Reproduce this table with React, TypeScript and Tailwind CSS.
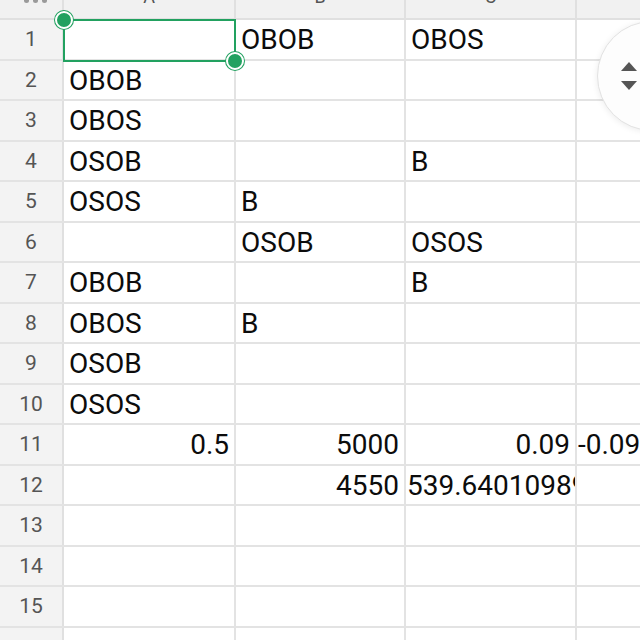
import React from "react";

type Cell = { t: string; a?: "l" | "r"; clip?: boolean };

const rows: (Cell | null)[][] = [
  [null, { t: "OBOB" }, { t: "OBOS" }, null],
  [{ t: "OBOB" }, null, null, null],
  [{ t: "OBOS" }, null, null, null],
  [{ t: "OSOB" }, null, { t: "B" }, null],
  [{ t: "OSOS" }, { t: "B" }, null, null],
  [null, { t: "OSOB" }, { t: "OSOS" }, null],
  [{ t: "OBOB" }, null, { t: "B" }, null],
  [{ t: "OBOS" }, { t: "B" }, null, null],
  [{ t: "OSOB" }, null, null, null],
  [{ t: "OSOS" }, null, null, null],
  [{ t: "0.5", a: "r" }, { t: "5000", a: "r" }, { t: "0.09", a: "r" }, { t: "-0.0945", clip: true }],
  [null, { t: "4550", a: "r" }, { t: "539.64010989", clip: true }, null],
  [null, null, null, null],
  [null, null, null, null],
  [null, null, null, null],
  [null, null, null, null],
];

const colW = ["w-[172px]", "w-[170px]", "w-[171px]", "w-[172px]"];

function CellView({ c, i }: { c: Cell | null; i: number }) {
  const base = `${colW[i]} shrink-0 h-full border-r-2 border-[#e3e3e3] flex items-center overflow-hidden whitespace-nowrap text-[28px] leading-none text-[#0c0c0c] pt-[2px]`;
  if (!c) return <div className={base} />;
  if (c.a === "r")
    return (
      <div className={`${base} justify-end pr-[5px]`}>
        <span>{c.t}</span>
      </div>
    );
  if (c.clip)
    return (
      <div className={`${base} pl-[1px]`}>
        <span>{c.t}</span>
      </div>
    );
  return (
    <div className={`${base} pl-[5px]`}>
      <span>{c.t}</span>
    </div>
  );
}

export default function App() {
  return (
    <div
      className="relative w-[640px] h-[640px] overflow-hidden bg-white"
      style={{ fontFamily: "Roboto, 'Noto Sans', sans-serif" }}
    >
      {/* header row */}
      <div className="flex h-[20px] bg-[#f1f1f1] border-b-2 border-[#e0e0e0] overflow-hidden">
        <div className="w-[64px] shrink-0 h-full border-r-2 border-[#e0e0e0] flex justify-center gap-[4px] pl-[8px]">
          <div className="w-[5px] h-[5px] rounded-full bg-[#9a9a9a] -mt-[2px]" />
          <div className="w-[5px] h-[5px] rounded-full bg-[#9a9a9a] -mt-[2px]" />
          <div className="w-[5px] h-[5px] rounded-full bg-[#9a9a9a] -mt-[2px]" />
        </div>
        {["A", "B", "C", "D"].map((l, i) => (
          <div
            key={l}
            className={`${colW[i]} shrink-0 h-full border-r-2 border-[#e0e0e0] flex justify-center text-[18px] leading-none text-[#555]`}
          >
            <span className="-mt-[12px]">{l}</span>
          </div>
        ))}
      </div>
      {rows.map((r, ri) => (
        <div key={ri} className="flex h-[40.5px] border-b-2 border-[#e3e3e3]">
          <div className="w-[64px] shrink-0 h-full bg-[#f3f3f3] border-r-2 border-[#e0e0e0] flex items-center justify-center text-[21px] text-[#555] pt-[1px]">
            {ri < 15 ? ri + 1 : ""}
          </div>
          {r.map((c, ci) => (
            <CellView key={ci} c={c} i={ci} />
          ))}
        </div>
      ))}

      {/* selection */}
      <div className="absolute left-[63px] top-[19px] w-[173px] h-[43px] border-2 border-[#22a160]" />
      <div className="absolute left-[55px] top-[11px] w-[18px] h-[18px] rounded-full bg-[#22a160] border-[2.5px] border-white ring-1 ring-[#22a160]" />
      <div className="absolute left-[226px] top-[52px] w-[18px] h-[18px] rounded-full bg-[#22a160] border-[2.5px] border-white ring-1 ring-[#22a160]" />

      {/* scroll pill */}
      <div className="absolute left-[597px] top-[21px] w-[110px] h-[110px] rounded-full bg-[#fdfdfd] border border-[#e2e2e2] shadow-[0_1px_6px_rgba(0,0,0,0.08)] flex flex-col items-start pl-[23px] justify-center gap-[10px]">
        <svg width="16" height="9" viewBox="0 0 16 9">
          <path d="M8 0 L16 9 L0 9 Z" fill="#555" />
        </svg>
        <svg width="16" height="9" viewBox="0 0 16 9">
          <path d="M0 0 L16 0 L8 9 Z" fill="#555" />
        </svg>
      </div>
    </div>
  );
}
